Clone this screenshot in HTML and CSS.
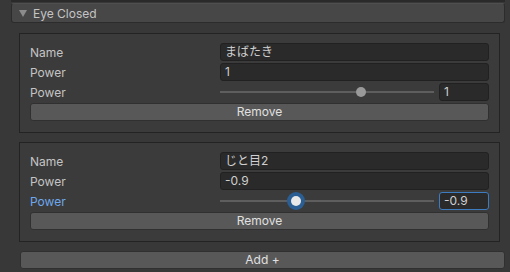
FILE: index.html
```html
<!DOCTYPE html>
<html lang="en">
<head>
  <meta charset="UTF-8" />
  <title>Eye Closed</title>
  <link rel="stylesheet" href="styles.css">
</head>
<body>

  <!-- Edge of the section above -->
  <div class="top-edge"></div>

  <!-- Foldout header -->
  <div class="foldout">
    <span class="arrow"></span>
    <span class="foldout-title">Eye Closed</span>
  </div>

  <div class="list">
    <div class="item">
      <div class="row"><span class="label">Name</span><div class="field">まばたき</div></div>
      <div class="row"><span class="label">Power</span><div class="field">1</div></div>
      <div class="row">
        <span class="label">Power</span>
        <div class="slider">
          <div class="track"><div class="track-inner"><span class="thumb" style="left: 66.67%"></span></div></div>
          <div class="field num">1</div>
        </div>
      </div>
      <div class="button">Remove</div>
    </div>

    <div class="item">
      <div class="row"><span class="label">Name</span><div class="field">じと目2</div></div>
      <div class="row"><span class="label">Power</span><div class="field">-0.9</div></div>
      <div class="row">
        <span class="label active">Power</span>
        <div class="slider">
          <div class="track"><div class="track-inner"><span class="thumb active" style="left: 35%"></span></div></div>
          <div class="field num focused">-0.9</div>
        </div>
      </div>
      <div class="button">Remove</div>
    </div>
  </div>

  <div class="button add">Add +</div>

</body>
</html>
```

FILE: styles.css
```css
body {
  margin: 0;
  width: 510px;
  height: 272px;
  overflow: hidden;
  background: #383838;
  font-family: 'Inter', 'Noto Sans CJK JP', sans-serif;
  font-size: 12px;
  color: #c4c4c4;
}

.top-edge {
  height: 2px;
  margin: 0 5px 0 11px;
  background: #2a2a2a;
}

.foldout {
  display: flex;
  align-items: center;
  box-sizing: border-box;
  height: 20px;
  margin: 1px 5px 0 11px;
  padding-left: 7px;
  background: #474747;
  border: 1px solid #2c2c2c;
  border-top-color: #4f4f4f;
  border-radius: 3px;
  color: #c4c4c4;
}

.arrow {
  width: 0;
  height: 0;
  border-left: 4px solid transparent;
  border-right: 4px solid transparent;
  border-top: 7px solid #8c8c8c;
  margin-right: 6px;
}

.list {
  padding: 10px 10px 0 19px;
}

.item {
  display: flex;
  flex-direction: column;
  gap: 2px;
  padding: 9px 10px 11px 10px;
  margin-bottom: 9px;
  background: #3b3b3b;
  border: 1px solid #232323;
}

.row {
  display: flex;
  align-items: center;
  height: 18px;
}

.label {
  flex: none;
  width: 190px;
}

.label.active {
  color: #6ea8ec;
}

.field {
  flex: 1;
  box-sizing: border-box;
  height: 18px;
  padding: 0 4px;
  line-height: 16px;
  background: #2a2a2a;
  border: 1px solid #212121;
  border-radius: 3px;
  color: #cfcfcf;
  white-space: nowrap;
}

.field.num {
  flex: none;
  width: 50px;
}

.field.focused {
  border-color: #3d7cc0;
}

.slider {
  flex: 1;
  display: flex;
  align-items: center;
  gap: 5px;
}

.track {
  flex: 1;
  position: relative;
  height: 2px;
  background: #5e5e5e;
}

.track-inner {
  position: absolute;
  left: 5px;
  right: 5px;
  top: 0;
  bottom: 0;
}

.thumb {
  position: absolute;
  top: -4px;
  width: 10px;
  height: 10px;
  margin-left: -5px;
  border-radius: 50%;
  background: #999;
}

.thumb.active {
  background: #e8e8e8;
  box-shadow: 0 0 0 4px #2b5e93;
}

.button {
  box-sizing: border-box;
  height: 18px;
  line-height: 16px;
  text-align: center;
  background: #585858;
  border: 1px solid #303030;
  border-radius: 3px;
  color: #e0e0e0;
}

.add {
  margin: 1px 5px 0 20px;
}
```
